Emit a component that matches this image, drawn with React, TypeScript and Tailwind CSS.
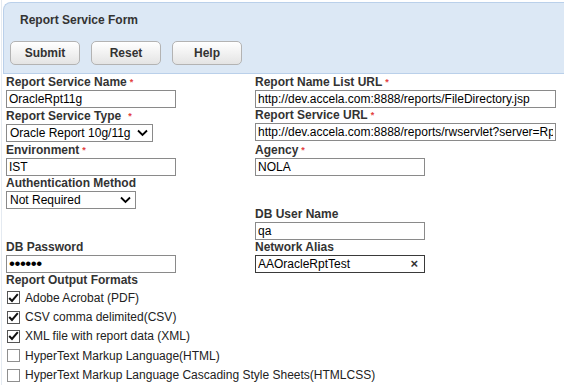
import React from "react";

const font = { fontFamily: '"Liberation Sans", Arial, sans-serif' };

function Label({ text, req, wide }: { text: string; req?: boolean; wide?: boolean }) {
  return (
    <div className="h-[15px] leading-[15px] text-[12px] font-bold text-[#333] whitespace-nowrap">
      {text}
      {req && (
        <span className={`text-[9px] text-[#e34040] align-top ${wide ? "ml-[7px]" : "ml-[3px]"}`}>*</span>
      )}
    </div>
  );
}

function Field({ value, w, focus }: { value: string; w: string; focus?: boolean }) {
  return (
    <div
      className={`relative h-[18px] bg-white border ${focus ? "border-[#3a3a3a]" : "border-[#8a8a8a]"} ${w} overflow-hidden`}
    >
      <input
        readOnly
        type="text"
        value={value}
        style={font}
        className="block w-full h-[16px] px-[2px] text-[12px] leading-[16px] text-black outline-none bg-transparent"
      />
      {focus && (
        <span className="absolute right-[6px] top-[1px] text-[13px] leading-[14px] font-bold text-[#333]">×</span>
      )}
    </div>
  );
}

function Password({ w }: { w: string }) {
  return (
    <div className={`h-[18px] bg-white border border-[#8a8a8a] ${w} overflow-hidden flex items-center pl-[2px]`}>
      <span className="text-[17px] leading-[16px] text-black tracking-[-0.5px]">••••••</span>
    </div>
  );
}

function Select({ value, w }: { value: string; w: string }) {
  return (
    <div className={`h-[18px] border border-[#8a8a8a] bg-white flex items-center justify-between pl-[3px] pr-[4px] ${w}`}>
      <span className="text-[12px] leading-[16px] text-black">{value}</span>
      <svg width="11" height="8" viewBox="0 0 11 8">
        <path d="M1 1.5 L5.5 6 L10 1.5" fill="none" stroke="#000" strokeWidth="1.8" />
      </svg>
    </div>
  );
}

function Check({ on, text }: { on: boolean; text: string }) {
  return (
    <div className="h-[19.4px] flex items-center pl-[1px] gap-[5px]">
      <span
        className={`w-[13px] h-[13px] border ${on ? "border-[#555]" : "border-[#8f8f8f]"} bg-white flex items-center justify-center`}
      >
        {on && (
          <svg width="11" height="10" viewBox="0 0 11 10">
            <path d="M1.2 5 L4 8 L9.8 1.2" fill="none" stroke="#111" strokeWidth="2" />
          </svg>
        )}
      </span>
      <span className="text-[12px] text-[#222] whitespace-nowrap">{text}</span>
    </div>
  );
}

function Btn({ text }: { text: string }) {
  return (
    <div className="w-[70px] h-[24px] rounded-[5px] border border-[#b3b3b3] bg-gradient-to-b from-white to-[#e4e4e4] flex items-center justify-center text-[12px] font-bold text-[#333]">
      {text}
    </div>
  );
}

export default function App() {
  return (
    <div className="w-[564px] h-[385px] bg-white overflow-hidden border-l border-[#e4eaf1] ml-[1px]" style={font}>
      <div className="mt-[2px] ml-[1px] h-[72px] bg-[#dce8f5] border-t border-b border-l border-[#bad0ea] rounded-tl-[8px] pl-[6px] pt-[10px]">
        <div className="pl-[10px] h-[14px] leading-[14px] text-[12px] font-bold text-[#333]">Report Service Form</div>
        <div className="flex gap-[11px] mt-[14px]">
          <Btn text="Submit" />
          <Btn text="Reset" />
          <Btn text="Help" />
        </div>
      </div>

      <div className="grid grid-cols-[249px_1fr] pl-[4px] mt-[1px]">
        <div className="h-[33px]">
          <Label text="Report Service Name" req />
          <Field value="OracleRpt11g" w="w-[170px]" />
        </div>
        <div className="h-[33px]">
          <Label text="Report Name List URL" req />
          <Field value="http://dev.accela.com:8888/reports/FileDirectory.jsp" w="w-[301px]" />
        </div>

        <div className="h-[33px] pt-[1px]">
          <Label text="Report Service Type" req wide />
          <Select value="Oracle Report 10g/11g" w="w-[147px]" />
        </div>
        <div className="h-[33px]">
          <Label text="Report Service URL" req />
          <Field value="http://dev.accela.com:8888/reports/rwservlet?server=RptSvr_dev" w="w-[301px]" />
        </div>

        <div className="h-[33px] pt-[2px]">
          <Label text="Environment" req />
          <Field value="IST" w="w-[170px]" />
        </div>
        <div className="h-[33px] pt-[2px]">
          <Label text="Agency" req />
          <Field value="NOLA" w="w-[170px]" />
        </div>

        <div className="h-[33px] pt-[2px]">
          <Label text="Authentication Method" />
          <Select value="Not Required" w="w-[130px]" />
        </div>
        <div className="h-[33px]" />

        <div className="h-[33px]" />
        <div className="h-[33px]">
          <Label text="DB User Name" />
          <Field value="qa" w="w-[170px]" />
        </div>

        <div className="h-[33px]">
          <Label text="DB Password" />
          <Password w="w-[170px]" />
        </div>
        <div className="h-[33px]">
          <Label text="Network Alias" />
          <Field value="AAOracleRptTest" w="w-[170px]" focus />
        </div>
      </div>

      <div className="pl-[4px]">
        <Label text="Report Output Formats" />
        <Check on text="Adobe Acrobat (PDF)" />
        <Check on text="CSV comma delimited(CSV)" />
        <Check on text="XML file with report data (XML)" />
        <Check on={false} text="HyperText Markup Language(HTML)" />
        <Check on={false} text="HyperText Markup Language Cascading Style Sheets(HTMLCSS)" />
      </div>
    </div>
  );
}
